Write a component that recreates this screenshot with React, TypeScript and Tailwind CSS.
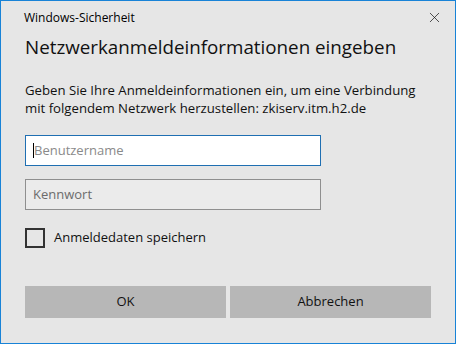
import { X } from 'lucide-react'

export default function App() {
  return (
    <div className="w-[456px] h-[344px] border border-[#1883d7] bg-[#e6e6e6] text-[#000] font-['Segoe_UI','Open_Sans','Noto_Sans',sans-serif] flex flex-col">
      {/* Titelleiste */}
      <div className="h-[33px] flex items-center justify-between pl-[23px] pr-[12px]">
        <span className="text-[12px]">Windows-Sicherheit</span>
        <X className="w-[17px] h-[17px] text-[#111]" strokeWidth={1} />
      </div>

      <div className="flex flex-col px-6">
        <h1 className="text-[18.8px] leading-[28px] text-[#111] -mt-[1px]">Netzwerkanmeldeinformationen eingeben</h1>

        <p className="text-[13.2px] leading-[18px] mt-[20px] text-[#111]">
          Geben Sie Ihre Anmeldeinformationen ein, um eine Verbindung
          <br />
          mit folgendem Netzwerk herzustellen: zkiserv.itm.h2.de
        </p>

        <div className="mt-[18px] w-[296px] h-[31px] border border-[#1f6fb2] bg-white flex items-center px-[7px]">
          <span className="w-px h-[15px] bg-black" />
          <span className="text-[13px] text-[#8a8a8a]">Benutzername</span>
        </div>

        <div className="mt-[13px] w-[296px] h-[31px] border border-[#8f8f8f] bg-[#ebebeb] flex items-center px-[7px]">
          <span className="text-[13px] text-[#6b6b6b]">Kennwort</span>
        </div>

        <label className="mt-[18px] flex items-center gap-[9px]">
          <span className="w-[20px] h-[20px] border-2 border-[#333]" />
          <span className="text-[13px] text-[#111]">Anmeldedaten speichern</span>
        </label>

        <div className="mt-[38px] flex gap-[4px]">
          <button className="w-[201px] h-[32px] bg-[#b7b7b7] text-[13px] text-[#111]">OK</button>
          <button className="w-[201px] h-[32px] bg-[#b7b7b7] text-[13px] text-[#111]">Abbrechen</button>
        </div>
      </div>
    </div>
  )
}
